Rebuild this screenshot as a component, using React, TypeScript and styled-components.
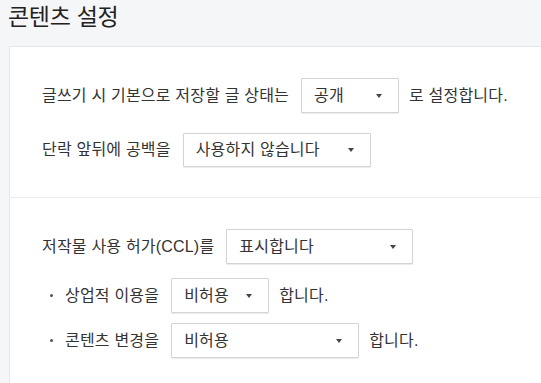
import styled, { createGlobalStyle } from 'styled-components';

const GlobalStyle = createGlobalStyle`
  html, body {
    margin: 0;
    padding: 0;
    background: #f5f6f8;
    overflow: hidden;
  }
  body {
    font-family: 'Liberation Sans', 'Noto Sans CJK KR', sans-serif;
    color: #333;
  }
`;

const StyledPage = styled.div`
  width: 541px;
  height: 383px;
  overflow: hidden;
`;

const StyledTitle = styled.h2`
  margin: 0;
  padding: 2px 0 0 8px;
  height: 46px;
  box-sizing: border-box;
  font-size: 23px;
  line-height: 30px;
  font-weight: 400;
  color: #222;
  letter-spacing: -0.3px;
`;

const StyledPanel = styled.div`
  margin-left: 9px;
  width: 580px;
  background: #fff;
  border: 1px solid #e6e7ea;
  box-sizing: border-box;
  min-height: 360px;
`;

interface sectionType {
  top: number;
  bottom: number;
  divider?: boolean;
}

const StyledSection = styled.div<sectionType>`
  display: flex;
  flex-direction: column;
  padding: ${(props) => props.top}px 0 ${(props) => props.bottom}px 32px;
  border-bottom: ${(props) => (props.divider ? '1px solid #ececec' : 'none')};
`;

interface rowType {
  bullet?: boolean;
  space?: number;
}

const StyledRow = styled.div<rowType>`
  display: flex;
  align-items: center;
  gap: 10px;
  margin-top: ${(props) => props.space || 0}px;
  font-size: 16px;
  line-height: 20px;
  letter-spacing: 0.2px;
  padding-left: ${(props) => (props.bullet ? '8px' : '0')};
`;

const StyledBullet = styled.span`
  width: 3px;
  height: 3px;
  border-radius: 50%;
  background: #555;
  margin-right: 2px;
`;

interface selectType {
  w: number;
  h: number;
}

const StyledSelect = styled.div<selectType>`
  display: flex;
  align-items: center;
  justify-content: space-between;
  box-sizing: border-box;
  width: ${(props) => props.w}px;
  height: ${(props) => props.h}px;
  margin: 0 0 0 2px;
  padding: 0 16px 0 12px;
  border: 1px solid #d3d4d6;
  border-radius: 1px;
  box-shadow: 0 1px 1px rgba(0, 0, 0, 0.08);
  background: #fff;
  color: #333;
`;

const StyledArrow = styled.span`
  width: 0;
  height: 0;
  border-left: 3.5px solid transparent;
  border-right: 3.5px solid transparent;
  border-top: 4px solid #444;
`;

function Select({ value, w, h }: { value: string; w: number; h: number }) {
  return (
    <StyledSelect w={w} h={h}>
      <span>{value}</span>
      <StyledArrow />
    </StyledSelect>
  );
}

export default function App() {
  return (
    <StyledPage>
      <GlobalStyle />
      <StyledTitle>콘텐츠 설정</StyledTitle>
      <StyledPanel>
        <StyledSection top={31} bottom={30} divider>
          <StyledRow>
            <span>글쓰기 시 기본으로 저장할 글 상태는</span>
            <Select value="공개" w={98} h={35} />
            <span>로 설정합니다.</span>
          </StyledRow>
          <StyledRow space={20}>
            <span>단락 앞뒤에 공백을</span>
            <Select value="사용하지 않습니다" w={188} h={34} />
          </StyledRow>
        </StyledSection>
        <StyledSection top={31} bottom={30}>
          <StyledRow>
            <span>저작물 사용 허가(CCL)를</span>
            <Select value="표시합니다" w={187} h={35} />
          </StyledRow>
          <StyledRow bullet space={14}>
            <StyledBullet />
            <span>상업적 이용을</span>
            <Select value="비허용" w={98} h={35} />
            <span>합니다.</span>
          </StyledRow>
          <StyledRow bullet space={10}>
            <StyledBullet />
            <span>콘텐츠 변경을</span>
            <Select value="비허용" w={188} h={35} />
            <span>합니다.</span>
          </StyledRow>
        </StyledSection>
      </StyledPanel>
    </StyledPage>
  );
}
